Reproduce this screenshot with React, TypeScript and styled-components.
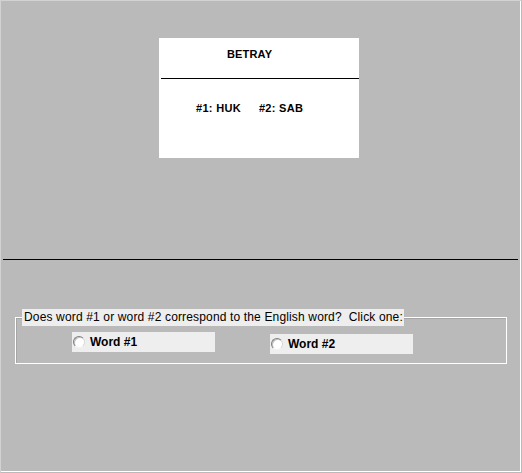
import React from "react";
import styled, { createGlobalStyle } from "styled-components";

const Global = createGlobalStyle`
  html, body { margin: 0; padding: 0; background: #bababa; }
  body { font-family: "Liberation Sans", Arial, sans-serif; }
  * { box-sizing: border-box; }
`;

const Frame = styled.div`
  width: 522px;
  height: 473px;
  background: #bababa;
  border-left: 1px solid #d2d2d2;
  border-top: 1px solid #d2d2d2;
  border-right: 1px solid #bababa;
  border-bottom: 1px solid #bababa;
  box-shadow: inset -1px -1px 0 #ffffff;
  display: flex;
  flex-direction: column;
`;

const TopArea = styled.div`
  height: 258px;
  padding: 37px 0 0 158px;
`;

const Card = styled.div`
  width: 200px;
  height: 120px;
  background: #ffffff;
  display: flex;
  flex-direction: column;
`;

const Title = styled.div`
  height: 40px;
  padding: 10px 0 0 68px;
  font-size: 11px;
  line-height: 13px;
  font-weight: bold;
  letter-spacing: 0.15px;
  color: #000;
`;

const Rule = styled.div`
  height: 1px;
  margin-left: 2px;
  background: #000;
`;

const Words = styled.div`
  display: flex;
  gap: 18px;
  margin-top: 23px;
  padding-left: 37px;
  font-size: 11px;
  line-height: 13px;
  font-weight: bold;
  letter-spacing: 0.3px;
  color: #000;
`;

const Divider = styled.div`
  height: 1px;
  margin: 0 3px 0 2px;
  background: #000;
`;

const BottomArea = styled.div`
  padding: 49px 0 0 14px;
`;

const Group = styled.fieldset`
  width: 492px;
  margin: 0;
  padding: 6px 0 9px 6px;
  border: 1px solid #ffffff;
  box-shadow: 1px 1px 0 #a6a6a6 inset;
  min-width: 0;
`;

const Legend = styled.legend`
  padding: 0 1px 0 2px;
  margin: 0;
  background: #eeeeee;
  font-size: 12px;
  line-height: 17px;
  letter-spacing: 0.15px;
  color: #000;
  white-space: pre;
`;

const Options = styled.div`
  display: flex;
  align-items: flex-start;
  padding-left: 50px;
  gap: 55px;
`;

const Option = styled.label<{ $drop?: number }>`
  width: 143px;
  height: 20px;
  margin-top: ${(p) => p.$drop ?? 0}px;
  background: #eeeeee;
  display: flex;
  align-items: center;
  padding-left: 1px;
  gap: 5px;
  font-size: 12px;
  line-height: 20px;
  font-weight: bold;
  color: #000;
`;

const Radio = styled.span`
  width: 12px;
  height: 12px;
  border-radius: 50%;
  background: #ffffff;
  border: 1px solid;
  border-color: #7e7e7e #d8d8d8 #f4f4f4 #7e7e7e;
  box-shadow: inset 1px 1px 0 #c4c4c4;
  flex: none;
`;

export default function App() {
  return (
    <>
      <Global />
      <Frame>
        <TopArea>
          <Card>
            <Title>BETRAY</Title>
            <Rule />
            <Words>
              <span>#1: HUK</span>
              <span>#2: SAB</span>
            </Words>
          </Card>
        </TopArea>
        <Divider />
        <BottomArea>
          <Group>
            <Legend>{"Does word #1 or word #2 correspond to the English word?  Click one:"}</Legend>
            <Options>
              <Option>
                <Radio />
                <span>Word #1</span>
              </Option>
              <Option $drop={2}>
                <Radio />
                <span>Word #2</span>
              </Option>
            </Options>
          </Group>
        </BottomArea>
      </Frame>
    </>
  );
}
